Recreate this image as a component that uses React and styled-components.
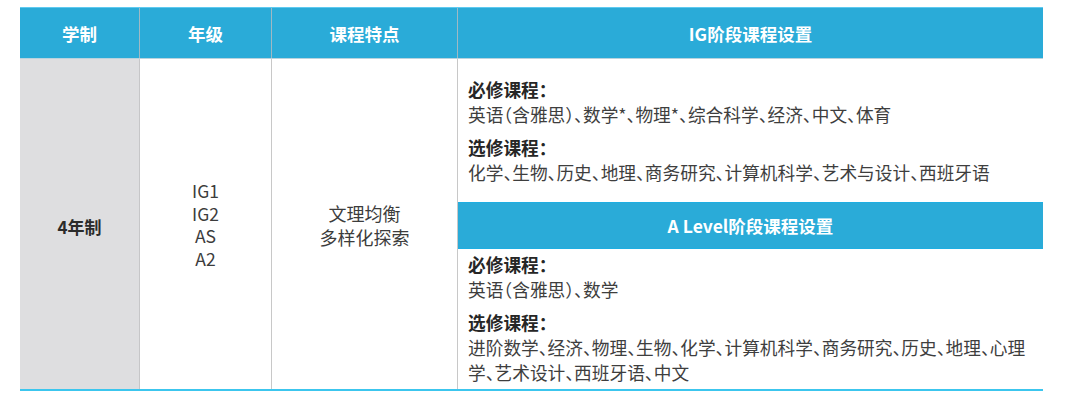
import styled, { createGlobalStyle } from "styled-components"

const GlobalStyle = createGlobalStyle`
    body {
        margin: 0;
        background: #ffffff;
        font-family: "Noto Sans CJK SC", "Noto Sans", sans-serif;
    }
`

const columns = "120px 132px 186px 585px"

const igRequired = "英语（含雅思）、数学*、物理*、综合科学、经济、中文、体育"
const igElective = "化学、生物、历史、地理、商务研究、计算机科学、艺术与设计、西班牙语"
const alRequired = "英语（含雅思）、数学"
const alElective = "进阶数学、经济、物理、生物、化学、计算机科学、商务研究、历史、地理、心理学、艺术设计、西班牙语、中文"

function CourseGroup({ required, elective, top, bottom }) {
    return (
        <Group $top={top} $bottom={bottom}>
            <Label>必修课程：</Label>
            <Line>{required}</Line>
            <Label $gap>选修课程：</Label>
            <Line>{elective}</Line>
        </Group>
    )
}

function App() {
    return (
        <>
        <GlobalStyle/>
        <Table>
            <HeadRow>
                <HeadCell>学制</HeadCell>
                <HeadCell>年级</HeadCell>
                <HeadCell>课程特点</HeadCell>
                <HeadCell $last>IG阶段课程设置</HeadCell>
            </HeadRow>
            <BodyRow>
                <SystemCell>4年制</SystemCell>
                <CenterCell>
                    <Stack $lh={22.5} $size={17.5}>
                        <span>IG1</span>
                        <span>IG2</span>
                        <span>AS</span>
                        <span>A2</span>
                    </Stack>
                </CenterCell>
                <CenterCell>
                    <Stack $lh={24} $size={18}>
                        <span>文理均衡</span>
                        <span>多样化探索</span>
                    </Stack>
                </CenterCell>
                <CourseCell>
                    <CourseGroup required={igRequired} elective={igElective} top={18} bottom={15}/>
                    <SubHead>A Level阶段课程设置</SubHead>
                    <CourseGroup required={alRequired} elective={alElective} top={3} bottom={4}/>
                </CourseCell>
            </BodyRow>
        </Table>
        </>
    )
}

const Table = styled.div`
    width: 1023px;
    margin: 7px 0 0 20px;
    border-bottom: 2px solid #3cc6ee;
`

const HeadRow = styled.div`
    display: grid;
    grid-template-columns: ${columns};
    height: 52px;
    background: #2aabd8;
    border-top: 1px solid #5fcaf0;
    border-bottom: 1px solid #b9d3de;
    box-sizing: border-box;
`

const HeadCell = styled.div`
    display: flex;
    align-items: center;
    justify-content: center;
    color: #ffffff;
    font-size: 17.5px;
    font-weight: 700;
    border-right: ${(p) => (p.$last ? "none" : "1px solid #9fb9c4")};
`

const BodyRow = styled.div`
    display: grid;
    grid-template-columns: ${columns};
    height: 330px;
`

const SystemCell = styled.div`
    display: flex;
    align-items: center;
    justify-content: center;
    background: #dedee0;
    border-right: 1px solid #c6c6c8;
    color: #2b2b2b;
    font-size: 17px;
    font-weight: 700;
    padding-top: 5px;
`

const CenterCell = styled.div`
    display: flex;
    align-items: center;
    justify-content: center;
    border-right: 1px solid #c8c8c8;
    color: #3c3c3c;
`

const Stack = styled.div`
    display: flex;
    flex-direction: column;
    align-items: center;
    font-size: ${(p) => p.$size}px;
    line-height: ${(p) => p.$lh}px;
    padding-top: 2px;
`

const CourseCell = styled.div`
    display: flex;
    flex-direction: column;
`

const Group = styled.div`
    padding: ${(p) => p.$top}px 4px ${(p) => p.$bottom}px 10px;
    flex: 1;
    font-size: 17.7px;
    line-height: 25px;
    font-feature-settings: "halt";
`

const Label = styled.div`
    color: #262626;
    font-weight: 700;
    margin-top: ${(p) => (p.$gap ? "8px" : "0")};
`

const Line = styled.div`
    color: #3e3e3e;
`

const SubHead = styled.div`
    height: 47px;
    display: flex;
    align-items: center;
    justify-content: center;
    background: #2aabd8;
    border-top: 1px solid #1eaee2;
    border-bottom: 1px solid #1eaee2;
    box-sizing: border-box;
    color: #ffffff;
    font-size: 17.5px;
    font-weight: 700;
`

export default App
